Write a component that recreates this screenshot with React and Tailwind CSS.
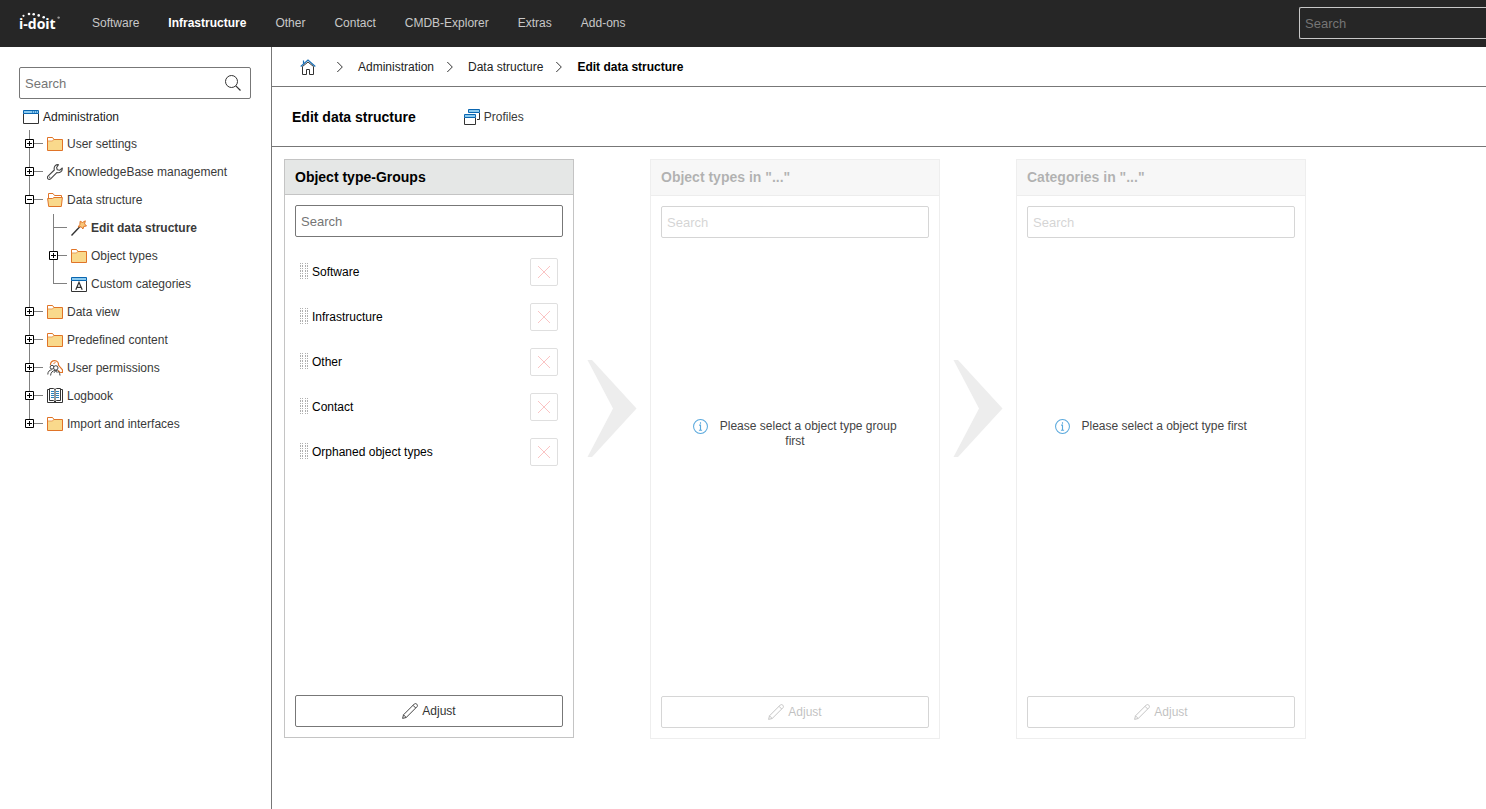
import React from "react";

function Svg({ children, className = "size-4" }) {
  return (
    <svg className={"shrink-0 " + className} viewBox="0 0 16 16" fill="none" aria-hidden="true">
      {children}
    </svg>
  );
}

const FolderIcon = () => (
  <Svg>
    <path d="M.5 14.500V1.500H5.500L7 3.500H15.500V14.500Z" fill="#f9d98c" stroke="#e07428" />
    <path d="M1 2H5.200L6.300 3.600L5 5H1Z" fill="#fff" />
    <path d="M1 5H5.200L7 3.500" stroke="#e9a05c" />
  </Svg>
);

const FolderOpenIcon = () => (
  <Svg>
    <path d="M1.500 6.500V1.500H6L7.500 3.500H14.500V6.500" fill="#fff" stroke="#e07428" />
    <path d="M.6 6.500H5.500L7 5.500H15.400L14.300 14.500H1.700Z" fill="#f9d98c" stroke="#e07428" />
  </Svg>
);

const WindowIcon = () => (
  <Svg>
    <path d="M.5 4.500V14.500H15.500V4.500" fill="#fff" stroke="#333" />
    <path d="M.5 1.500H15.500V4.500H.5Z" fill="#8ccbf0" stroke="#0a66b0" />
    <path d="M9.500 2V4M11.500 2V4M13.500 2V4" stroke="#0a66b0" strokeOpacity=".6" />
  </Svg>
);

const WrenchIcon = () => (
  <Svg>
    <path
      d="M11.500.7C9 .2 6.800 2.300 7.200 5L7.300 6L1 12.200C.3 13 .3 14 1 14.800C1.800 15.600 2.900 15.600 3.600 14.900L9.800 8.600C12.800 9.400 15.500 7.300 15.300 4L12.600 6.300L10.300 5.800L9.600 3.500Z"
      stroke="#444"
      strokeWidth="1.100"
      strokeLinejoin="round"
    />
    <circle cx="2.700" cy="13.200" r=".6" fill="#333" />
  </Svg>
);

const WandIcon = () => (
  <Svg>
    <path d="M.5 15.500L9 6.500" stroke="#333" strokeWidth="1.400" />
    <path
      d="M9.200 1.200L11.500 2.500L14.300.8L13.600 3.900L15.500 6L12.800 6.400L11.900 9L10.200 6.800L7.200 6.900L8.900 4.400Z"
      fill="#f9c67a"
      stroke="#e07428"
    />
  </Svg>
);

const LetterWindowIcon = () => (
  <Svg>
    <path d="M.5 4.500V15.500H15.500V4.500" fill="#fff" stroke="#333" />
    <path d="M.5 1.500H15.500V4.500H.5Z" fill="#8ccbf0" stroke="#0a66b0" />
    <path d="M4.800 13.700L8 6.200L11.200 13.700M5.800 11.300H10.200" stroke="#333" strokeWidth="1.200" />
  </Svg>
);

const PermissionsIcon = () => (
  <Svg>
    <path
      d="M3.500 5C3.300 2.300 5.300.6 7.600.6C10.300.6 11.900 2.800 11.400 5.200L15.500 9.800V12.500H13L11 10.300"
      stroke="#e07428"
      strokeWidth="1.200"
    />
    <path d="M6.500 3.500L8.500 2.500" stroke="#e07428" />
    <circle cx="5" cy="7.200" r="1.900" stroke="#444" />
    <circle cx="8.800" cy="7.900" r="2.200" fill="#fff" stroke="#444" />
    <path d="M.8 14.500C.8 11.500 2.500 10 4.800 9.800M3.600 15.500C3.800 12.500 5.500 10.500 8.500 10.400C11.500 10.500 12.800 12.500 13 15.500" stroke="#444" />
    <path d="M7 12.800L8.600 10.800L10.300 12.800" stroke="#444" />
  </Svg>
);

const BookIcon = () => (
  <Svg>
    <path d="M2.500 1.500H.5V14.500H15.500V1.500H13.500" stroke="#333" />
    <path d="M2.500.5H6.500L8 1.500L9.500.5H13.500V12.500H9.500L8 14L6.500 12.500H2.500Z" fill="#fff" stroke="#333" />
    <path d="M8 1.500V14" stroke="#333" />
    <path d="M5.500 3V11M10.500 3V11" stroke="#2d82bd" strokeWidth="3" strokeDasharray="1 1" />
  </Svg>
);

const SearchIcon = () => (
  <Svg>
    <circle cx="6.500" cy="6.500" r="6" stroke="#333" />
    <path d="M10.800 10.800L15.500 15.500" stroke="#333" strokeWidth="1.200" />
  </Svg>
);

const HomeIcon = () => (
  <Svg>
    <path d="M2.500 7.500V15.500H6.500V10.500H9.500V15.500H13.500V7.500L8 3Z" fill="#fff" stroke="#333" />
    <path d="M.7 7.500L8 1L15.300 7.500M3.500 4.500V1.500" stroke="#1a6fb5" strokeWidth="1.200" />
  </Svg>
);

const ChevronIcon = () => (
  <Svg>
    <path d="M5.300 3L10.300 8L5.300 13" stroke="#333" />
  </Svg>
);

const ProfilesIcon = () => (
  <Svg>
    <path d="M4.500 3.500V.5H15.500V3.500Z" fill="#8ccbf0" stroke="#0a66b0" />
    <path d="M15.500 4V10.500H13" stroke="#333" />
    <path d="M.5 8.500V15.500H11.500V8.500" fill="#fff" stroke="#333" />
    <path d="M.5 5.500H11.500V8.500H.5Z" fill="#8ccbf0" stroke="#0a66b0" />
  </Svg>
);

const PencilIcon = () => (
  <Svg>
    <path
      d="M.6 15.400L1.500 11.800L12.300 1C13 .4 14 .4 14.800 1.200C15.600 2 15.600 3 15 3.700L4.200 14.500ZM1.500 11.800L4.200 14.500M11 2.300L13.700 5"
      stroke="#444"
      strokeLinejoin="round"
    />
  </Svg>
);

const CrossIcon = () => (
  <Svg>
    <path d="M2 2L14 14M14 2L2 14" stroke="#f04040" />
  </Svg>
);

const InfoIcon = () => (
  <Svg className="mr-2 inline-block size-[15px] align-top">
    <circle cx="8" cy="8" r="7.400" stroke="#5aa9dd" strokeWidth="1.100" />
    <path d="M8 3.500V5M6.500 6.500H8V12M6.300 12H9.700" stroke="#5aa9dd" strokeWidth="1.200" />
  </Svg>
);

const GripIcon = () => (
  <svg className="h-[17px] w-2 shrink-0" viewBox="0 0 8 17" aria-hidden="true">
    <path
      d="M.5 0V17M2.500 0V17M5.500 0V17M7.500 0V17"
      stroke="#b0b0b0"
      strokeDasharray="1 1 2 1"
      fill="none"
    />
  </svg>
);

const ArrowIcon = () => (
  <svg className="mt-[201px] h-[97px] w-[50px] shrink-0" viewBox="0 0 50 97" aria-hidden="true">
    <path d="M.5 0H5L49.500 48.500L5 97H.5L26 48.500Z" fill="#ededed" />
  </svg>
);

const Logo = () => (
  <svg className="h-[22px] w-11 shrink-0" viewBox="0 0 44 22" role="img" aria-label="i-doit">
    <text x="0" y="17" fill="#fff" fontSize="14" fontWeight="700" fontFamily="'Open Sans', sans-serif">
      i-doit
    </text>
    <g fill="#fff">
      <circle cx="4.500" cy="3.800" r="1.100" />
      <circle cx="10" cy="2" r="1.300" />
      <circle cx="14.700" cy="2.200" r="1.300" />
      <circle cx="19.700" cy="3.400" r="1.300" />
      <circle cx="24.700" cy="5.200" r="1.300" />
      <circle cx="39.600" cy="5.600" r="1.200" fill="#999" />
    </g>
  </svg>
);

function Connector({ kind, last }) {
  return (
    <svg className="h-7 w-6 shrink-0" viewBox="0 0 24 28" fill="none" aria-hidden="true">
      <path d={last ? "M6.500 0V14" : "M6.500 0V28"} stroke="#808080" />
      {kind !== "pass" && <path d="M6.500 13.500H20" stroke="#808080" />}
      {(kind === "plus" || kind === "minus") && (
        <>
          <path d="M2.500 9.500H10.500V17.500H2.500Z" fill="#fff" stroke="#000" />
          <path d={kind === "plus" ? "M4 13.500H9M6.500 11V16" : "M4 13.500H9"} stroke="#000" />
        </>
      )}
    </svg>
  );
}

const tree = [
  { label: "User settings", icon: FolderIcon, kind: "plus" },
  { label: "KnowledgeBase management", icon: WrenchIcon, kind: "plus" },
  {
    label: "Data structure",
    icon: FolderOpenIcon,
    kind: "minus",
    children: [
      { label: "Edit data structure", icon: WandIcon, kind: "leaf", active: true },
      { label: "Object types", icon: FolderIcon, kind: "plus" },
      { label: "Custom categories", icon: LetterWindowIcon, kind: "leaf" },
    ],
  },
  { label: "Data view", icon: FolderIcon, kind: "plus" },
  { label: "Predefined content", icon: FolderIcon, kind: "plus" },
  { label: "User permissions", icon: PermissionsIcon, kind: "plus" },
  { label: "Logbook", icon: BookIcon, kind: "plus" },
  { label: "Import and interfaces", icon: FolderIcon, kind: "plus" },
];

function Tree({ nodes, nested }) {
  return (
    <ul>
      {nodes.map((node, i) => {
        const Icon = node.icon;
        return (
          <li key={node.label}>
            <div className="flex h-7 items-center">
              {nested && <Connector kind="pass" />}
              <Connector kind={node.kind} last={i === nodes.length - 1} />
              <a href="#" className={"flex items-center gap-1 whitespace-nowrap " + (node.active ? "font-bold" : "")}>
                <Icon />
                {node.label}
              </a>
            </div>
            {node.children && <Tree nodes={node.children} nested />}
          </li>
        );
      })}
    </ul>
  );
}

const navItems = ["Software", "Infrastructure", "Other", "Contact", "CMDB-Explorer", "Extras", "Add-ons"];
const groups = ["Software", "Infrastructure", "Other", "Contact", "Orphaned object types"];

function Panel({ title, disabled, children }) {
  return (
    <section
      className={
        "flex w-[290px] shrink-0 flex-col border " + (disabled ? "border-[#eeeeee]" : "mb-px border-[#c4c4c4]")
      }
    >
      <h2
        className={
          "flex shrink-0 items-center border-b border-[#c4c4c4] bg-[#e5e7e6] px-2.5 text-sm font-bold text-black " +
          (disabled ? "h-9 pb-px opacity-30" : "h-[35px]")
        }
      >
        {title}
      </h2>
      <div className="flex grow flex-col p-2.5">
        <input
          type="text"
          placeholder="Search"
          aria-label={"Search " + title}
          disabled={disabled}
          className={
            "h-8 w-full rounded-xs border border-[#777] px-[5px] text-[13px] placeholder:text-[#757575] " +
            (disabled ? "opacity-30" : "")
          }
        />
        <div className="grow">{children}</div>
        <button
          type="button"
          disabled={disabled}
          className={
            "flex h-8 items-center justify-center gap-1 rounded-xs border border-[#777] text-[#333] " +
            (disabled ? "opacity-30" : "")
          }
        >
          <PencilIcon />
          Adjust
        </button>
      </div>
    </section>
  );
}

export default function App() {
  return (
    <div className="flex min-h-screen flex-col overflow-x-hidden bg-white font-['Liberation_Sans',Arial,sans-serif] text-xs text-[#3a3a3a]">
      <header className="flex h-[47px] shrink-0 items-center justify-between bg-[#262626] pb-px">
        <div className="flex items-center pl-[19px]">
          <Logo />
          <nav className="ml-[29px] flex gap-[29px]">
            {navItems.map((item) => (
              <a
                key={item}
                href="#"
                className={item === "Infrastructure" ? "font-bold text-white" : "text-[#c8c8c8]"}
              >
                {item}
              </a>
            ))}
          </nav>
        </div>
        <input
          type="text"
          placeholder="Search"
          aria-label="Global search"
          className="h-8 w-[187px] rounded-l-xs border border-r-0 border-[#c8c8c8] px-[5px] text-[13px] text-white placeholder:text-[#757575]"
        />
      </header>

      <div className="flex grow">
        <aside className="w-[272px] shrink-0 border-r border-[#777] pt-5">
          <div className="ml-[19px] mr-5 flex h-8 items-center rounded-xs border border-[#777] pr-[9px]">
            <input
              type="text"
              placeholder="Search"
              aria-label="Search navigation"
              className="h-full min-w-0 grow px-[5px] text-[13px] placeholder:text-[#757575]"
            />
            <button type="button" aria-label="Search">
              <SearchIcon />
            </button>
          </div>
          <div className="pl-[23px] pt-[10px]">
            <a href="#" className="mb-[5px] flex items-center gap-1 text-[#222]">
              <WindowIcon />
              Administration
            </a>
            <Tree nodes={tree} />
          </div>
        </aside>

        <main className="flex min-w-0 grow flex-col">
          <nav aria-label="Breadcrumb" className="flex h-10 shrink-0 items-center border-b border-[#777] pl-7 text-[#222]">
            <a href="#" aria-label="Home" className="mr-4">
              <HomeIcon />
            </a>
            <ChevronIcon />
            <a href="#" className="ml-2.5 mr-2">Administration</a>
            <ChevronIcon />
            <a href="#" className="ml-2.5 mr-2">Data structure</a>
            <ChevronIcon />
            <a href="#" className="ml-2.5 font-bold text-black">Edit data structure</a>
          </nav>

          <div className="flex h-[60px] shrink-0 items-center gap-12 border-b border-[#777] pl-5">
            <h1 className="text-sm font-bold text-black">Edit data structure</h1>
            <button type="button" className="flex items-center gap-1">
              <ProfilesIcon />
              Profiles
            </button>
          </div>

          <div className="flex grow px-3 pb-[70px] pt-3">
            <Panel title="Object type-Groups">
              <ul className="py-3">
                {groups.map((group) => (
                  <li key={group} className="flex h-[45px] items-center gap-1 px-[5px] text-black">
                    <GripIcon />
                    <span className="grow">{group}</span>
                    <button
                      type="button"
                      disabled
                      aria-label={"Remove " + group}
                      className="flex size-7 items-center justify-center rounded-xs border border-[#999] opacity-30"
                    >
                      <CrossIcon />
                    </button>
                  </li>
                ))}
              </ul>
            </Panel>
            <div className="flex w-[76px] shrink-0 justify-center">
              <ArrowIcon />
            </div>
            <Panel title={'Object types in "..."'} disabled>
              <p className="px-6 pb-5 pt-[181px] text-center leading-[15px] text-[#444]">
                <InfoIcon /> Please select a object type group first
              </p>
            </Panel>
            <div className="flex w-[76px] shrink-0 justify-center">
              <ArrowIcon />
            </div>
            <Panel title={'Categories in "..."'} disabled>
              <p className="pb-5 pr-5 pt-[181px] text-center leading-[15px] text-[#444]">
                <InfoIcon /> Please select a object type first
              </p>
            </Panel>
          </div>
        </main>
      </div>
    </div>
  );
}
